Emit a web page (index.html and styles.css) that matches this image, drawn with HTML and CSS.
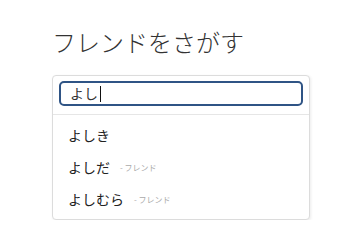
FILE: index.html
```html
<!DOCTYPE html>
<html lang="ja">
<head>
<meta charset="utf-8">
<link rel="stylesheet" href="styles.css">
</head>
<body>
<div class="page">
  <h1 class="title">フレンドをさがす</h1>
  <div class="card">
    <div class="search-row">
      <div class="search-box"><span class="query">よし</span><span class="caret"></span></div>
    </div>
    <ul class="results">
      <li class="item">よしき</li>
      <li class="item">よしだ<span class="tag">- フレンド</span></li>
      <li class="item">よしむら<span class="tag">- フレンド</span></li>
    </ul>
  </div>
</div>
</body>
</html>
```
FILE: styles.css
```css
html, body {
  margin: 0;
  padding: 0;
  background: #ffffff;
}
body {
  font-family: "Noto Sans CJK JP", "Noto Sans", sans-serif;
  color: #222;
}
.page {
  padding: 24px 0 0 52px;
  width: 258px;
}
.title {
  margin: 0 0 15px 0;
  font-size: 24px;
  line-height: 36px;
  font-weight: 300;
  color: #333;
  letter-spacing: 0;
}
.card {
  border: 1px solid #dcdcdc;
  border-radius: 4px;
  box-shadow: 1px 1px 3px rgba(0,0,0,0.08);
  background: #fff;
}
.search-row {
  padding: 5px 6px 8px 6px;
  border-bottom: 1px solid #e6e6e6;
}
.search-box {
  display: flex;
  align-items: center;
  height: 21px;
  border: 2px solid #2f5485;
  border-radius: 5px;
  padding: 0 9px;
  font-size: 14px;
  color: #333;
}
.query {
  line-height: 21px;
}
.caret {
  display: inline-block;
  width: 1px;
  height: 16px;
  background: #111;
  margin-left: 2px;
}
.results {
  list-style: none;
  margin: 0;
  padding: 4px 0 4px 0;
}
.item {
  height: 32px;
  display: flex;
  align-items: center;
  padding-left: 15px;
  font-size: 14px;
  color: #222;
}
.tag {
  font-size: 8px;
  color: #aaa;
  margin-left: 10px;
}
```
